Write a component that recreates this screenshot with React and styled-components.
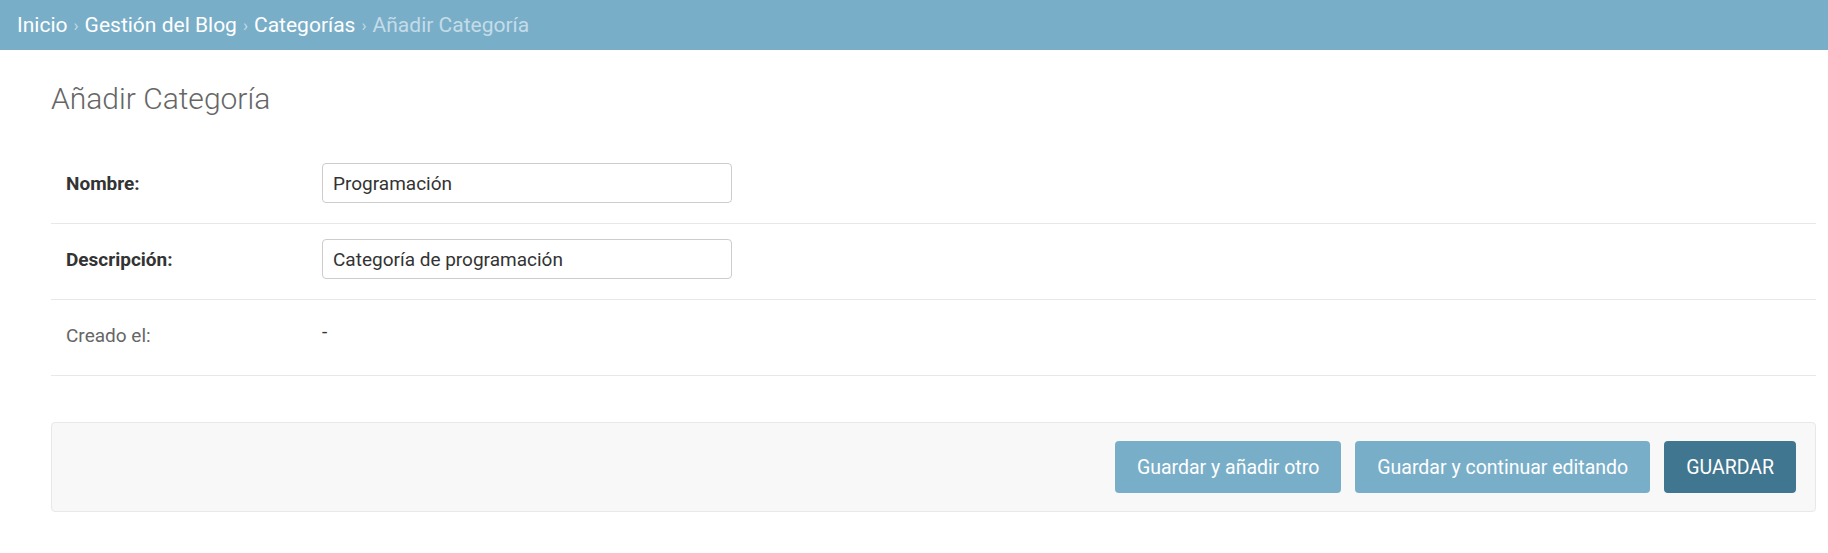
import React from "react";
import styled, { createGlobalStyle } from "styled-components";

const GlobalStyle = createGlobalStyle`
  html, body {
    margin: 0;
    padding: 0;
    background: #fff;
  }
  body {
    font-family: Roboto, "Liberation Sans", sans-serif;
    color: #333;
  }
`;

const Breadcrumbs = styled.nav`
  height: 50px;
  box-sizing: border-box;
  background: #79aec8;
  padding: 0 17px;
  display: flex;
  align-items: center;
  font-size: 21px;
  color: #c4dce8;
  a {
    color: #fff;
    text-decoration: none;
  }
`;

const Sep = styled.span`
  margin: 0 6px;
  font-size: 17px;
  color: #c4dce8;
`;

const Content = styled.main`
  padding: 29px 12px 0 51px;
`;

const Title = styled.h1`
  margin: 0 0 30px;
  font-size: 30px;
  line-height: 1.3;
  font-weight: 300;
  color: #666;
`;

const Row = styled.div`
  display: flex;
  align-items: center;
  padding: 15px 15px 20px;
  border-bottom: 1px solid #e8e8e8;
`;

const Label = styled.label`
  width: 256px;
  flex-shrink: 0;
  font-size: 19px;
  font-weight: ${(p) => (p.$required ? 700 : 400)};
  color: ${(p) => (p.$required ? "#333" : "#666")};
`;

const Field = styled.div`
  min-height: 40px;
  display: flex;
  align-items: center;
`;

const Input = styled.input`
  width: 410px;
  height: 40px;
  box-sizing: border-box;
  border: 1px solid #ccc;
  border-radius: 4px;
  padding: 0 10px;
  font-family: inherit;
  font-size: 19px;
  color: #333;
  background: #fff;
  outline: none;
`;

const Readonly = styled.div`
  font-size: 19px;
  color: #333;
  padding-bottom: 8px;
`;

const SubmitRow = styled.div`
  margin-top: 46px;
  display: flex;
  justify-content: flex-end;
  gap: 14px;
  padding: 18px 19px;
  background: #f8f8f8;
  border: 1px solid #e8e8e8;
  border-radius: 4px;
`;

const Button = styled.button`
  height: 52px;
  padding: 0 22px;
  border: none;
  border-radius: 4px;
  font-family: inherit;
  font-size: 19.5px;
  color: #fff;
  background: ${(p) => (p.$primary ? "#417690" : "#79aec8")};
  text-transform: ${(p) => (p.$primary ? "uppercase" : "none")};
  cursor: pointer;
`;

export default function App() {
  return (
    <>
      <GlobalStyle />
      <Breadcrumbs>
        <a href="#">Inicio</a>
        <Sep>›</Sep>
        <a href="#">Gestión del Blog</a>
        <Sep>›</Sep>
        <a href="#">Categorías</a>
        <Sep>›</Sep>
        <span>Añadir Categoría</span>
      </Breadcrumbs>
      <Content>
        <Title>Añadir Categoría</Title>
        <form>
          <Row>
            <Label $required>Nombre:</Label>
            <Field>
              <Input defaultValue="Programación" />
            </Field>
          </Row>
          <Row>
            <Label $required>Descripción:</Label>
            <Field>
              <Input defaultValue="Categoría de programación" />
            </Field>
          </Row>
          <Row>
            <Label>Creado el:</Label>
            <Field>
              <Readonly>-</Readonly>
            </Field>
          </Row>
          <SubmitRow>
            <Button type="button">Guardar y añadir otro</Button>
            <Button type="button">Guardar y continuar editando</Button>
            <Button type="button" $primary>Guardar</Button>
          </SubmitRow>
        </form>
      </Content>
    </>
  );
}
